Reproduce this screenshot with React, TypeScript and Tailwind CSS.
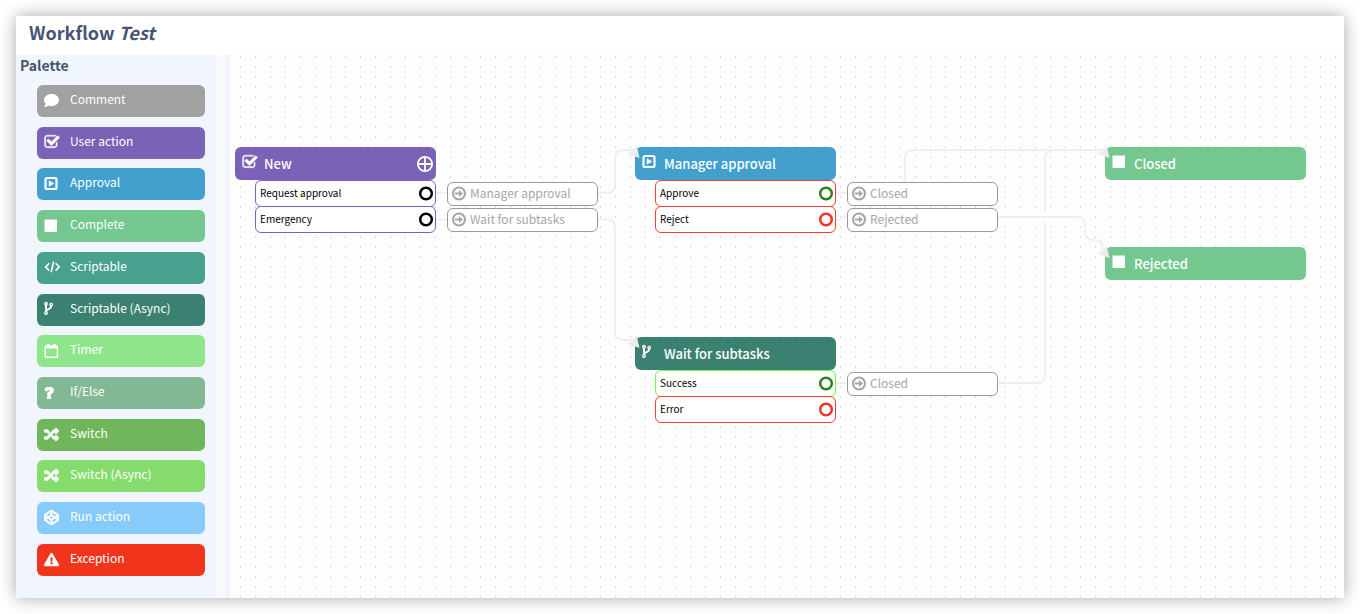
import type { ReactNode } from "react";
import {
  FaCodepen,
  FaComment,
  FaExclamationTriangle,
  FaQuestion,
  FaRandom,
} from "react-icons/fa";

function CheckSquareIcon() {
  return (
    <svg viewBox="0 0 1792 1792" className="size-4" fill="currentColor" stroke="currentColor" strokeWidth="50" aria-hidden="true">
      <path d="M1472 930v318q0 119-84.5 203.5t-203.5 84.5h-832q-119 0-203.5-84.5t-84.5-203.5v-832q0-119 84.5-203.5t203.5-84.5h832q63 0 117 25 15 7 18 23 3 17-9 29l-49 49q-10 10-23 10-3 0-9-2-23-6-45-6h-832q-66 0-113 47t-47 113v832q0 66 47 113t113 47h832q66 0 113-47t47-113v-254q0-13 9-22l64-64q10-10 23-10 6 0 12 3 20 8 20 29zm231-489l-814 814q-24 24-57 24t-57-24l-430-430q-24-24-24-57t24-57l110-110q24-24 57-24t57 24l263 263 647-647q24-24 57-24t57 24l110 110q24 24 24 57t-24 57z" />
    </svg>
  );
}

function PlaySquareIcon() {
  return (
    <svg viewBox="0 0 16 16" className="size-4" aria-hidden="true">
      <rect x="1.5" y="2" width="11" height="11" rx="1.6" fill="none" stroke="currentColor" strokeWidth="2.2" />
      <path d="M4.8 4.300v6.400l5.400-3.200z" fill="currentColor" />
    </svg>
  );
}

function SquareIcon() {
  return (
    <svg viewBox="0 0 16 16" className="size-4" aria-hidden="true">
      <rect x="0.500" y="1.500" width="12.500" height="12.500" fill="currentColor" />
    </svg>
  );
}

function CodeIcon() {
  return (
    <svg viewBox="0 0 16 16" className="size-4" fill="none" stroke="currentColor" strokeWidth="1.6" aria-hidden="true">
      <path d="M5.200 4.200 1.600 7.900l3.600 3.700M11.600 4.200l3.600 3.700-3.600 3.700M9.600 2.600 7.200 13.200" />
    </svg>
  );
}

function ForkIcon() {
  return (
    <svg viewBox="0 0 16 16" className="size-4" fill="none" stroke="currentColor" strokeWidth="1.3" aria-hidden="true">
      <circle cx="2" cy="2.800" r="1.300" />
      <circle cx="2" cy="12" r="1.300" />
      <circle cx="7.200" cy="3.600" r="1.300" />
      <path d="M2 4.100v6.600M7.200 4.900c0 3.600-4.900 2.600-5 5.400" strokeWidth="1.9" />
    </svg>
  );
}

function CalendarIcon() {
  return (
    <svg viewBox="0 0 16 16" className="size-4" aria-hidden="true">
      <rect x="1.200" y="3" width="12.200" height="11.200" rx="0.800" fill="none" stroke="currentColor" strokeWidth="1.400" />
      <path d="M1 3h12.600v2.400H1z" fill="currentColor" />
      <rect x="3" y="0.800" width="2.600" height="3.600" rx="1" fill="currentColor" />
      <rect x="9" y="0.800" width="2.600" height="3.600" rx="1" fill="currentColor" />
    </svg>
  );
}

function ArrowCircleIcon() {
  return (
    <svg viewBox="0 0 16 16" className="size-4 shrink-0" aria-hidden="true">
      <circle cx="8" cy="7.500" r="6" fill="none" stroke="currentColor" strokeWidth="2.100" />
      <path d="M4 6.400h4V4l4 3.500-4 3.500V8.600H4z" fill="currentColor" />
    </svg>
  );
}

const palette: { label: string; color: string; icon: ReactNode }[] = [
  { label: "Comment", color: "bg-[#a1a1a1]", icon: <FaComment className="size-[15px]" /> },
  { label: "User action", color: "bg-[#7a62b6]", icon: <CheckSquareIcon /> },
  { label: "Approval", color: "bg-[#429fce]", icon: <PlaySquareIcon /> },
  { label: "Complete", color: "bg-[#73c78f]", icon: <SquareIcon /> },
  { label: "Scriptable", color: "bg-[#48a08e]", icon: <CodeIcon /> },
  { label: "Scriptable (Async)", color: "bg-[#3b8172]", icon: <ForkIcon /> },
  { label: "Timer", color: "bg-[#8fe58b]", icon: <CalendarIcon /> },
  { label: "If/Else", color: "bg-[#82b994]", icon: <FaQuestion className="h-3 w-[10px] stroke-current stroke-[50]" /> },
  { label: "Switch", color: "bg-[#70b65a]", icon: <FaRandom className="size-[15px] stroke-current stroke-[26]" /> },
  { label: "Switch (Async)", color: "bg-[#85dc6c]", icon: <FaRandom className="size-[15px] stroke-current stroke-[26]" /> },
  { label: "Run action", color: "bg-[#87cbfb]", icon: <FaCodepen className="size-[15px] stroke-current stroke-[26]" /> },
  { label: "Exception", color: "bg-[#f0351c]", icon: <FaExclamationTriangle className="size-[15px]" /> },
];

type Outcome = { label: string; border: string; ring: string; target?: string };
type FlowNode = {
  title: string;
  place: string;
  color: string;
  icon: ReactNode;
  canAdd?: boolean;
  outcomes: Outcome[];
};

const nodes: FlowNode[] = [
  {
    title: "New",
    place: "left-[5px] top-[92px]",
    color: "bg-[#7a62b6]",
    icon: <CheckSquareIcon />,
    canAdd: true,
    outcomes: [
      { label: "Request approval", border: "border-[#7a62b6]", ring: "text-black", target: "Manager approval" },
      { label: "Emergency", border: "border-[#7a62b6]", ring: "text-black", target: "Wait for subtasks" },
    ],
  },
  {
    title: "Manager approval",
    place: "left-[405px] top-[92px]",
    color: "bg-[#429fce]",
    icon: <PlaySquareIcon />,
    outcomes: [
      { label: "Approve", border: "border-[#ee4030]", ring: "text-[#2a8120]", target: "Closed" },
      { label: "Reject", border: "border-[#ee4030]", ring: "text-[#ee3524]", target: "Rejected" },
    ],
  },
  {
    title: "Wait for subtasks",
    place: "left-[405px] top-[282px]",
    color: "bg-[#3b8172]",
    icon: <ForkIcon />,
    outcomes: [
      { label: "Success", border: "border-[#6cf84e]", ring: "text-[#2a8120]", target: "Closed" },
      { label: "Error", border: "border-[#ee4030]", ring: "text-[#ee3524]" },
    ],
  },
  { title: "Closed", place: "left-[875px] top-[92px]", color: "bg-[#73c78f]", icon: <SquareIcon />, outcomes: [] },
  { title: "Rejected", place: "left-[875px] top-[192px]", color: "bg-[#73c78f]", icon: <SquareIcon />, outcomes: [] },
];

function NodeCard({ node }: { node: FlowNode }) {
  return (
    <article className={`absolute ${node.place}`}>
      <div className={`flex h-[33px] w-[201px] items-center rounded-md pr-[3px] pl-[7px] text-white ${node.color}`}>
        <span className="mb-1 w-[22px]">{node.icon}</span>
        <h2 className="flex-1 text-[13px] leading-5 font-medium">{node.title}</h2>
        {node.canAdd && (
          <button type="button" aria-label="Add outcome">
            <svg viewBox="0 0 16 16" className="size-4" fill="none" stroke="currentColor" strokeWidth="1.8" aria-hidden="true">
              <circle cx="8" cy="8" r="7.100" />
              <path d="M8 1v14M1 8h14" />
            </svg>
          </button>
        )}
      </div>
      <ul className="ml-5">
        {node.outcomes.map((o) => (
          <li key={o.label} className="-mb-px flex items-center gap-[11px]">
            <div className={`flex h-[27px] w-[181px] items-center justify-between rounded-md border bg-white pr-px pl-1 ${o.border}`}>
              <span className="pb-[2px] text-[10px] leading-4 text-black">{o.label}</span>
              <svg viewBox="0 0 16 16" className={`size-4 ${o.ring}`} aria-hidden="true">
                <circle cx="8" cy="7.500" r="5.800" fill="none" stroke="currentColor" strokeWidth="2.500" />
              </svg>
            </div>
            {o.target && (
              <div className="flex h-6 w-[151px] items-center gap-[3px] rounded-md border border-[#999] bg-white pl-[3px] text-[#a6a6a6]">
                <ArrowCircleIcon />
                <span className="pb-[2px] text-xs leading-4">{o.target}</span>
              </div>
            )}
          </li>
        ))}
      </ul>
    </article>
  );
}

function Connections() {
  return (
    <svg className="absolute inset-0 size-full" aria-hidden="true">
      <defs>
        <pattern id="dots" width="15" height="10" patternUnits="userSpaceOnUse">
          <rect x="10" y="1" width="1" height="2" fill="#d8d8d8" />
        </pattern>
      </defs>
      <rect width="100%" height="100%" fill="url(#dots)" />
      <g transform="translate(-230 -55)" fill="none" stroke="#efefef" strokeWidth="2">
        <path d="M436 193H607Q615 193 615 185V158Q615 150 623 150H636" />
        <path d="M436 219.500H607Q615 219.500 615 227V332Q615 340 623 340H636" />
        <path d="M836 193H897Q905 193 905 185V158Q905 150 913 150H1104" />
        <path d="M836 220q5 0 6-1.500t5-1.500H1077Q1085 217 1085 225V232Q1085 240 1093 240H1095Q1102 240 1102 247V252" />
        <path d="M836 383H1037Q1045 383 1045 375V222M1045 212V158Q1045 150 1053 150" />
      </g>
    </svg>
  );
}

function Arrowheads() {
  return (
    <svg className="pointer-events-none absolute inset-0 size-full" aria-hidden="true">
      <g transform="translate(-230 -55)" fill="#ececec">
        <path d="M639.500 158 626.500 153.500 632.500 151.500 636.500 145z" />
        <path d="M639.500 348 626.500 343.500 632.500 341.500 636.500 335z" />
        <path d="M1109.500 158 1096.500 153.500 1102.500 151.500 1106.500 145z" />
        <path d="M1109.500 258 1096.500 253.500 1102.500 251.500 1106.500 245z" />
      </g>
    </svg>
  );
}

export default function App() {
  return (
    <div className="flex min-h-screen bg-white p-4 font-['Source_Sans_Pro','Noto_Sans_CJK_SC',sans-serif]">
      <div className="flex min-w-0 flex-1 flex-col bg-white shadow-[0_0_16px_rgba(0,0,0,0.35)]">
        <header className="flex h-[39px] items-center px-[13px]">
          <h1 className="pb-2 text-lg leading-6 font-bold text-[#495475]">
            Workflow <em>Test</em>
          </h1>
        </header>
        <main className="flex flex-1">
          <aside className="flex w-[200px] shrink-0 flex-col bg-[#f1f6fe]">
            <h2 className="mb-[10px] px-1 text-sm leading-5 font-bold text-[#495475]">Palette</h2>
            <div className="flex flex-1 flex-col justify-between gap-1 pr-[11px] pb-[22px] pl-[21px]">
              {palette.map((p) => (
                <button
                  key={p.label}
                  type="button"
                  className={`flex h-8 items-center rounded-md px-[7px] text-white ${p.color}`}
                >
                  <span className="w-[26px] pb-px">{p.icon}</span>
                  <span className="pb-1 text-xs leading-4">{p.label}</span>
                </button>
              ))}
            </div>
          </aside>
          <div className="w-[14px] shrink-0 border-r-[5px] border-[#eff4fe] bg-[#f8fafd]" />
          <section aria-label="Workflow canvas" className="relative flex-1 overflow-hidden bg-[#fdfdfd]">
            <Connections />
            {nodes.map((n) => (
              <NodeCard key={n.title} node={n} />
            ))}
            <Arrowheads />
          </section>
        </main>
      </div>
    </div>
  );
}
